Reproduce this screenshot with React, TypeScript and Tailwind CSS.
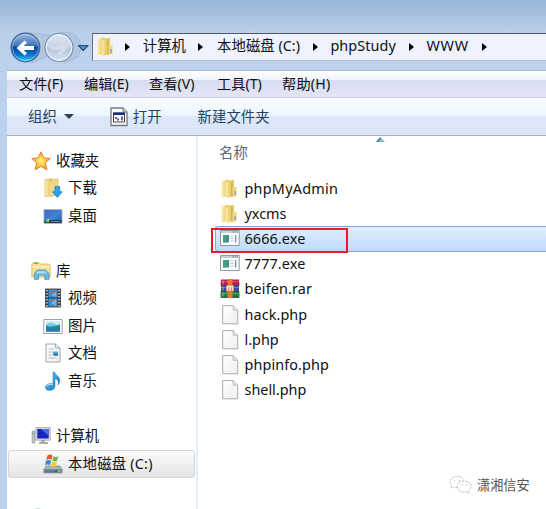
import type { ReactNode } from "react";

const Svg = ({ w = 20, h = 20, children }: { w?: number; h?: number; children: ReactNode }) => (
  <svg width={w} height={h} viewBox={`0 0 ${w} ${h}`} className="block shrink-0">
    {children}
  </svg>
);

const Gradients = () => (
  <svg width="0" height="0" className="absolute">
    <defs>
      <linearGradient id="back" x2="0" y2="1">
        <stop offset="0" stopColor="#9db9e2" />
        <stop offset=".42" stopColor="#4277bd" />
        <stop offset=".5" stopColor="#06489f" />
        <stop offset=".75" stopColor="#0870cb" />
        <stop offset="1" stopColor="#35d4fb" />
      </linearGradient>
      <linearGradient id="fwd" x2="0" y2="1">
        <stop offset="0" stopColor="#dce6f3" />
        <stop offset=".48" stopColor="#c9d6e8" />
        <stop offset=".52" stopColor="#b4c4da" />
        <stop offset="1" stopColor="#d8e6f6" />
      </linearGradient>
      <linearGradient id="fold" x2="1" y2="0">
        <stop offset="0" stopColor="#fbefb0" />
        <stop offset="1" stopColor="#e3c35c" />
      </linearGradient>
      <linearGradient id="foldFront" x2="1" y2="0">
        <stop offset="0" stopColor="#f8e69c" />
        <stop offset="1" stopColor="#e0be58" />
      </linearGradient>
      <linearGradient id="screen" x2="1" y2="1">
        <stop offset="0" stopColor="#1c4fae" />
        <stop offset=".5" stopColor="#3f86dc" />
        <stop offset="1" stopColor="#1c55a8" />
      </linearGradient>
      <linearGradient id="blue" x2="1" y2="1">
        <stop offset="0" stopColor="#67c5f2" />
        <stop offset="1" stopColor="#0a70bd" />
      </linearGradient>
      <linearGradient id="page" x2="1" y2="1">
        <stop offset="0" stopColor="#fff" />
        <stop offset="1" stopColor="#eeeef1" />
      </linearGradient>
      <radialGradient id="star">
        <stop offset="0" stopColor="#fff27a" />
        <stop offset="1" stopColor="#fba322" />
      </radialGradient>
    </defs>
  </svg>
);

const Folder = () => (
  <Svg>
    <path d="M1.5 2.2 7.5.6l1 .8v15.8l-7 1.1z" fill="url(#fold)" />
    <path d="M8 1.6 14 1v9l-6 7z" fill="#e6c868" />
    <path d="M6.5 3.5 12 1.8v15.4L6.8 19.3z" fill="url(#foldFront)" />
    <path d="M6.6 4v15" stroke="#fff3bd" strokeWidth=".8" />
    <path d="m12 8.6 4.6-.8v9.4l-4.6.8z" fill="#efd883" />
    <path d="M12 3v15" stroke="#cfa741" strokeWidth=".7" />
    <path d="M15 12v4" stroke="#67a7c4" strokeWidth="1.3" />
  </Svg>
);

const Star = () => (
  <Svg>
    <path d="m10 .8 2.7 6 6.5.7-4.9 4.5 1.6 6.8L10 15.4l-5.9 3.4L5.7 12 .8 7.5l6.5-.7z" fill="url(#star)" stroke="#e28331" strokeWidth="1" strokeLinejoin="round" />
  </Svg>
);

const Download = () => (
  <Svg>
    <path d="M2 1.5 8.5.8v17L2 18.5z" fill="url(#fold)" stroke="#d9bc65" strokeWidth=".7" />
    <path d="M8.5 1.3 15 .9V17l-7 1z" fill="#edd78e" stroke="#d9bc65" strokeWidth=".7" />
    <path d="M7 4.5 10 3v15l-3 1.2z" fill="#f5df96" stroke="#e2c46c" strokeWidth=".5" />
    <path d="M12 8.5h4.8v5.3h2.5L14.4 19.4l-5-5.6H12z" fill="#29a4e8" stroke="#167cb9" strokeWidth=".7" />
  </Svg>
);

const Desktop = () => (
  <Svg>
    <path d="M1 3.5h18v14H1z" fill="url(#screen)" stroke="#abb4c1" />
    <path d="M1.5 4h15L5 11l-3.5 1z" fill="#4779cc" opacity=".7" />
    <path d="M1.5 14h17v3h-17z" fill="#263d58" />
    <circle cx="4.5" cy="14.5" r="1.9" fill="#4fba79" />
    <path d="M4.5 12.8h1.7v2H4.5z" fill="#eebe32" />
    <path d="M8 15.5h9" stroke="#6c8190" />
  </Svg>
);

const Library = () => (
  <Svg>
    <path d="M.8 3 2.3 1.5h5.5L9.5 3H18l1.2 1v12H.8z" fill="#f6df94" stroke="#d7b961" strokeWidth=".8" />
    <path d="M1.5 6H19" stroke="#fff1bc" strokeWidth="1.3" />
    <path d="M3 2.4h4" stroke="#6bab54" strokeWidth="1.2" />
    <path d="M3.3 18.3v-5.8L6.3 9h8.2l3.5 3.5v5.8h-4.3V14H7.6v4.3z" fill="#69bae1" stroke="#3c95c3" strokeWidth=".8" />
    <path d="M5 12.5 7 10h7l2 2.5z" fill="#a8def1" />
  </Svg>
);

const Video = () => (
  <Svg>
    <path d="M2.5 1h15v18h-15z" fill="#29343c" stroke="#49555e" />
    <path d="M5.5 1.5h9v8h-9zM5.5 10.5h9v8h-9z" fill="#3d91cf" />
    <path d="m6 3 8 6V4zM6 12l8 6v-5z" fill="#b66556" />
    <path d="m8 7 5-3 1 5zM8 15l5-4v7z" fill="#69b7e4" />
    <path d="M4 2v17M16 2v17" stroke="#d3dedf" strokeWidth="1.5" strokeDasharray="1.5 1.5" />
  </Svg>
);

const Picture = () => (
  <Svg>
    <path d="M.8 3.5h18.4v14H.8z" fill="#fff" stroke="#99a2ad" />
    <path d="M3 5.5h14v10H3z" fill="#79c8ed" />
    <path d="M3 9q4-4 8-1.5T17 7v-1.5H3z" fill="#d5effa" />
    <path d="m3 9.5 4 1.2L17 9v6.5H3z" fill="#288c70" />
    <path d="M3 13q7-2 14 0v2.5H3z" fill="#247bb8" />
  </Svg>
);

const Document = () => (
  <Svg>
    <path d="M3 1h9.5l4.5 4v14H3z" fill="url(#page)" stroke="#9da6ac" />
    <path d="M12.5 1v4H17" fill="#e3eaed" stroke="#a3adb4" />
    <path d="M5.5 6h5M5.5 9h4M5.5 12h4M5.5 15h8" stroke="#b3b9cb" />
    <path d="M10 8.5h5v4h-5z" fill="#46a6d0" />
    <path d="M11 11h4v1.5h-4z" fill="#315c96" />
  </Svg>
);

const Music = () => (
  <Svg>
    <path d="M10 1h1.5c.4 3 5.6 4.2 5.4 8.5-.1 2-1 3.5-2.2 4.5 1.3-3.7-.2-5.3-2.7-6.2v7.4c0 2.3-2 4.1-4.9 4.3-3 .1-4.7-1.3-4.7-3.1 0-2.7 3.9-4.5 7.6-3.6z" fill="url(#blue)" stroke="#3b91c9" strokeWidth=".6" />
    <path d="M4 15q3-3 6-1" stroke="#a5ddfa" strokeWidth="1.2" fill="none" />
  </Svg>
);

const Computer = () => (
  <Svg>
    <path d="M1 5h3v12H1z" fill="#b9bfc2" stroke="#969fa2" strokeWidth=".6" />
    <path d="M1.5 7.5h2" stroke="#59b963" />
    <path d="M4.8 1.5h14.4v12.7H4.8z" fill="#d8dbe0" stroke="#afb5be" />
    <path d="M6.3 3h11.4v9.5H6.3z" fill="#1426bd" />
    <path d="M10 3h7.7v7z" fill="#5369d7" />
    <path d="M10 14h4v2h3v2H8v-2h2z" fill="#a8acad" />
  </Svg>
);

const Drive = () => (
  <Svg>
    <path d="m3 12-2.2 3.3V19h18.4v-4L17 12z" fill="#a9b1b5" stroke="#7a858b" strokeWidth=".6" />
    <path d="M1.5 15.5h17v3h-17z" fill="#526970" />
    <path d="M2.5 17h9" stroke="#38aac0" />
    <path d="M15 16h2.5v2H15z" fill="#79d556" />
    <path d="M4.5 1.5Q7-.5 9.5 1.5L8.5 6Q6 4 3 6z" fill="#e85b28" />
    <path d="M10.5 2q2.5 1.8 5 0l-1.2 4.5q-2.4 1.8-4.8 0z" fill="#73b946" />
    <path d="M2.8 7q2.5-2 5.3 0L7 11.5q-2.5-2-5 0z" fill="#398dcd" />
    <path d="M9 7.5q2.5 1.8 5 0L13 12q-2.5 2-5 0z" fill="#f7c72f" />
  </Svg>
);

const Exe = () => (
  <Svg>
    <path d="M.5 1.5h18.7v15H.5z" fill="#fcfdfe" stroke="#8d979f" />
    <path d="M1 2h17.7v2H1z" fill="#c8d1da" />
    <path d="M12.5 3h1.3M14.7 3H16M17 3h1" stroke="#68737c" />
    <path d="M3 6h6v7.5H3z" fill="#468f94" />
    <path d="M3 6h3v7.5H3z" fill="#45a377" />
    <path d="M10.5 7h3M10.5 9.5h3M10.5 12h3" stroke="#bdc3cc" />
    <path d="M15 6h2v7.5h-2z" fill="#d6dae1" />
    <path d="M15 6h1v7.5h-1z" fill="#7b8fa5" />
  </Svg>
);

const Rar = () => (
  <Svg>
    <path d="M1 .5h18l.5 6H.5z" fill="#bd1c58" />
    <path d="M1 6.5h18v6H1z" fill="#374da6" />
    <path d="M.5 12.5h19v6H.5z" fill="#178445" />
    <path d="M1 2.5h18" stroke="#e04a75" />
    <path d="M1 8.5h18" stroke="#657bcc" />
    <path d="M1 14.5h18" stroke="#42a968" />
    <path d="M1 6.3h18M1 12.3h18M1 18.3h18" stroke="#333a4a" />
    <path d="M7.5 0h5v19h-5z" fill="#e8762c" />
    <path d="M6 6.5h8v6H6z" fill="#dc725a" />
    <path d="M7.5 11.8V7.5h5v4.3M10 7.5v4.3" fill="none" stroke="#f5eed9" strokeWidth="1.4" />
    <path d="M3 1.5v4M3 7.5v4M3 13.5v4" stroke="#dfa23e" strokeWidth="1" />
  </Svg>
);

const Blank = () => (
  <Svg>
    <path d="M2.7.6h10.5l4.6 4.6v13.6H2.7z" fill="url(#page)" stroke="#a3a3a5" strokeWidth=".9" />
    <path d="M13.2.6v4.6h4.6" fill="#e8e8e9" stroke="#b2b2b4" strokeWidth=".9" />
  </Svg>
);

const OpenIcon = () => (
  <Svg w={18} h={20}>
    <path d="M1 1h12l4 4v13.5H1z" fill="#fafaf8" stroke="#777978" strokeWidth="1.3" />
    <path d="M13 1v4h4" fill="#ddd" stroke="#777978" />
    <path d="M3.5 6h11v9h-11z" fill="#fff" stroke="#34425f" />
    <path d="M3 5.5h12V8H3z" fill="#18307a" />
    <path d="M5 10h2v2H5z" fill="#ce3d3d" />
    <path d="M7 11.5h2v2H7z" fill="#355acd" />
    <path d="M11 9.5h2v2h-2z" fill="#3b55bb" />
    <path d="M11 11.5h2v2h-2z" fill="#cf423b" />
  </Svg>
);

const NavButtons = () => (
  <Svg w={82} h={34}>
    <path d="M19 2Q34 2 38 4q4 1 12-2 15-3 20 5l4 8-4 11-13 6-12-5q-5-4-9 0l-12 5-15-6L2 16 7 5z" fill="#b2c6df" stroke="#9fb5cf" strokeWidth=".7" />
    <circle cx="17.5" cy="16.5" r="14.3" fill="url(#back)" stroke="#43658f" strokeWidth="1.2" />
    <circle cx="17.5" cy="16.5" r="13" fill="none" stroke="#d5e5f8" strokeWidth=".6" opacity=".8" />
    <path d="m8.5 17 8.2-7.5 2.2 2.2-3.2 3.2H26v4H15.7l3.2 3.3-2.2 2.2z" fill="#fff" />
    <circle cx="51" cy="16.5" r="14" fill="url(#fwd)" stroke="#7d90aa" strokeWidth="1.2" />
    <circle cx="51" cy="16.5" r="12.8" fill="none" stroke="#eff6fe" />
    <path d="m60 17-8.2-7.5-2.2 2.2 3.2 3.2H42.5v4h10.3l-3.2 3.3 2.2 2.2z" fill="#d3dce8" stroke="#c4d0de" strokeWidth=".4" />
    <path d="M70.5 14.5H80l-4.8 5z" fill="#3f9dce" stroke="#254d77" strokeWidth="1.1" strokeLinejoin="round" />
  </Svg>
);

const Crumb = ({ className, children }: { className: string; children: ReactNode }) => (
  <div className={`flex shrink-0 items-center justify-between ${className}`}>
    <span className="size-0 border-y-[4.5px] border-l-[5px] border-y-transparent border-l-black" />
    <span className="pb-[2px]">{children}</span>
  </div>
);

const NavRow = ({ icon, text, top = false }: { icon: ReactNode; text: string; top?: boolean }) => (
  <div className={`flex h-[27.5px] shrink-0 items-center ${top ? "gap-[5px] pl-[23px]" : "gap-[5px] pl-[35px]"}`}>
    {icon}
    <span>{text}</span>
  </div>
);

const files = [
  { name: "phpMyAdmin", icon: <Folder />, fit: "tracking-[.25px]" },
  { name: "yxcms", icon: <Folder />, fit: "tracking-normal" },
  { name: "6666.exe", icon: <Exe />, fit: "tracking-[.1px]" },
  { name: "7777.exe", icon: <Exe />, fit: "tracking-[.1px]" },
  { name: "beifen.rar", icon: <Rar />, fit: "tracking-[.15px]" },
  { name: "hack.php", icon: <Blank />, fit: "tracking-[.1px]" },
  { name: "l.php", icon: <Blank />, fit: "tracking-normal" },
  { name: "phpinfo.php", icon: <Blank />, fit: "tracking-[.1px]" },
  { name: "shell.php", icon: <Blank />, fit: "tracking-normal" },
];

export default function App() {
  return (
    <div className="flex h-[509px] w-[546px] flex-col overflow-hidden whitespace-nowrap bg-[#bcd1ee] font-['Noto_Sans','Noto_Sans_CJK_SC',sans-serif] text-[14.4px] leading-5 text-[#101010]">
      <Gradients />
      <header className="flex h-[70px] shrink-0 items-start bg-linear-to-b from-[#9ab5d5] via-[#b9cfeb] via-45% to-[#bcd2ef] pl-2">
        <div className="mt-[31px] w-[84px] shrink-0">
          <NavButtons />
        </div>
        <div className="mt-[33px] flex h-7 flex-1 items-center border-y border-l border-t-[#505a67] border-b-[#b8c0d2] border-l-[#697585] bg-[#eff3ff] pl-[3px]">
          <Folder />
          <Crumb className="ml-[9px] w-[61px]">计算机</Crumb>
          <Crumb className="ml-[12px] w-[102px]">本地磁盘 (C:)</Crumb>
          <Crumb className="ml-[13px] w-[83px]">
            <span className="tracking-[.1px]">phpStudy</span>
          </Crumb>
          <Crumb className="ml-[13px] w-[60px]">
            <span className="tracking-[.8px]">WWW</span>
          </Crumb>
          <span className="ml-[13px] size-0 border-y-[4.5px] border-l-[5px] border-y-transparent border-l-black" />
        </div>
      </header>
      <div className="ml-[7px] flex min-h-0 flex-1 flex-col bg-white">
        <nav className="flex h-7 shrink-0 items-center border-t border-b border-t-[#a9bbd5] border-b-[#c9cde0] bg-[linear-gradient(#ffffff_0%,#f0f3fd_34%,#d8dcf0_36%,#e4e6f8_100%)] pl-[12px] text-[14.2px]">
          <span className="w-[65px]">文件(F)</span>
          <span className="w-[65px]">编辑(E)</span>
          <span className="w-[68px]">查看(V)</span>
          <span className="w-[65px]">工具(T)</span>
          <span className="tracking-[.2px]">帮助(H)</span>
        </nav>
        <div className="flex h-[38px] shrink-0 items-center border-b border-[#a9b1cd] bg-[linear-gradient(#fafdff_0%,#ecf5ff_48%,#dce7f7_50%,#dbe5f6_100%)] pl-[21px] text-[#254263]">
          <span>组织</span>
          <span className="ml-[7px] size-0 border-x-[5px] border-t-[5px] border-x-transparent border-t-[#254263]" />
          <div className="ml-[36px] flex items-center gap-[5px]">
            <OpenIcon />
            <span>打开</span>
          </div>
          <span className="ml-[36px]">新建文件夹</span>
        </div>
        <div className="flex min-h-0 flex-1">
          <aside className="flex w-[191px] shrink-0 flex-col overflow-hidden border-r-2 border-[#e5effb] pt-[11px] pl-px">
            <NavRow top icon={<Star />} text="收藏夹" />
            <NavRow icon={<Download />} text="下载" />
            <NavRow icon={<Desktop />} text="桌面" />
            <div className="h-[27.5px] shrink-0" />
            <NavRow top icon={<Library />} text="库" />
            <NavRow icon={<Video />} text="视频" />
            <NavRow icon={<Picture />} text="图片" />
            <NavRow icon={<Document />} text="文档" />
            <NavRow icon={<Music />} text="音乐" />
            <div className="h-[27.5px] shrink-0" />
            <NavRow top icon={<Computer />} text="计算机" />
            <div className="mr-px flex h-7 shrink-0 items-center gap-[5px] rounded-[3px] border border-[#d5d5d8] bg-linear-to-b from-[#fafafb] to-[#e6e4e7] pl-[34px]">
              <Drive />
              <span className="tracking-[.2px]">本地磁盘 (C:)</span>
            </div>
            <div className="mt-[30px] ml-[26px] size-2 shrink-0 rounded-full bg-[#bdd9ea]" />
          </aside>
          <main className="relative flex-1">
            <div className="flex h-10 items-start pt-[7px] pl-[21px] text-[#58677d]">
              <span>名称</span>
              <svg width="9" height="5" viewBox="0 0 9 5" className="-mt-[6px] ml-[128px]">
                <path d="m0 5 4.5-5L9 5z" fill="#84bcd6" />
                <path d="m0 5 4.5-5v2L2 5z" fill="#436d86" />
              </svg>
            </div>
            {files.map(({ name, icon, fit }, i) => (
              <div
                key={name}
                className={`ml-[17px] flex h-[25.2px] items-center gap-[4.5px] pl-1 ${i === 2 ? "rounded-l-[3px] border border-r-0 border-[#7da8db] bg-linear-to-b from-[#e1edff] to-[#bfdaff]" : "border border-transparent"}`}
              >
                {icon}
                <span className={fit}>{name}</span>
              </div>
            ))}
            <div className="absolute top-[92px] left-[13px] h-[25px] w-[137px] border-2 border-[#e51b2b]" />
            <div className="absolute top-[339px] left-[251px] flex items-center gap-[5px] text-[13.2px] text-[#555]">
              <svg width="23" height="20" viewBox="0 0 23 20" fill="none" stroke="#a9a9a9" strokeWidth=".8" strokeDasharray="2 1">
                <path d="M9 12.5q-3 .5-4.5-.6L2 13l.5-2.5Q-1 5.5 4 2.5q6-3 10.5 1.8" />
                <path d="M15 6c-9 0-9 11 0 11l2-.3 3 1.5-.6-2.5C25 12 21 6 15 6z" fill="white" />
                <path d="M5 5.5h1M10 5.5h1M12.5 10h1M17 10h1" />
              </svg>
              <span>潇湘信安</span>
            </div>
          </main>
        </div>
      </div>
    </div>
  );
}
